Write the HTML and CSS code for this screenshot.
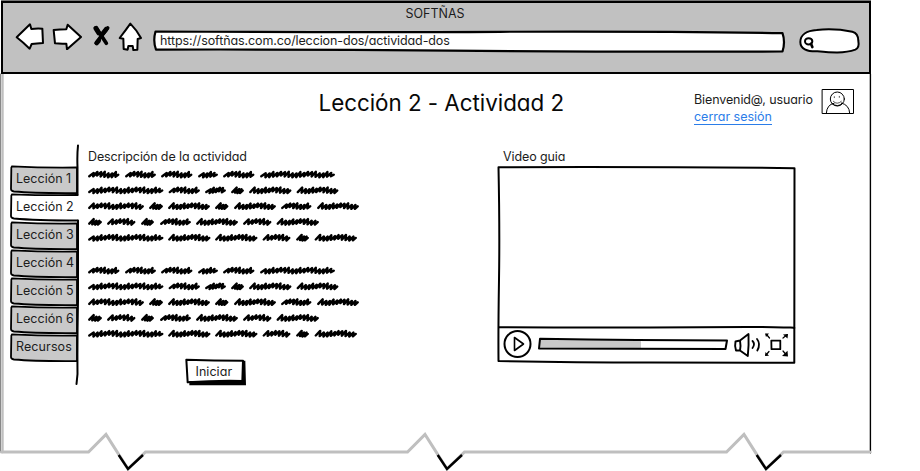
FILE: index.html
```html
<!DOCTYPE html>
<html lang="es">
<head>
<meta charset="utf-8">
<title>SOFTÑAS</title>
<link rel="stylesheet" href="styles.css">
</head>
<body>
<div class="window">
  <svg class="frame" viewBox="0 0 920 471" aria-hidden="true">
    <path d="M.5 74V452" stroke="#888" stroke-width="1"/>
    <path d="M2.5 74V452" stroke="#bfbfbf" stroke-width="2.4"/>
    <path d="M869.5 74V452" stroke="#ccc" stroke-width="1"/>
    <path d="M870.5 74V453" stroke="#000" stroke-width="1.2"/>
    <path class="edge" d="M1.5 452H88.500L106 434.500L128 469L145.500 452H407.500L425 434.500L447 469L464.500 452H726.500L744 434.500L766 469L783.500 452H870"/>
    <path class="edge tip" d="M118.700 455L128 469L143 455M437.700 455L447 469L462 455M756.700 455L766 469L781 455"/>
  </svg>

  <header class="browser">
    <div class="browser-title"><span>SOFTÑAS</span></div>
    <div class="toolbar">
      <svg class="back" viewBox="42 66 96 84"><path d="M50 112L90 73L94 87Q112 84 127 86L129 129Q110 130 95 132L89 146Q68 126 50 112Z"/></svg>
      <svg class="forward" viewBox="153 66 96 84"><path d="M161 90Q180 88 199 88L203 74L243 111L201 148L199 131Q181 132 165 130Z"/></svg>
      <svg class="stop" viewBox="276 72 60 72"><path d="M289 83Q302 104 319 130" stroke-width="11"/><path d="M323 84Q306 104 289 129" stroke-width="11"/><path d="M287 85L296 99M318 88L308 101M296 122L290 129" stroke-width="14"/></svg>
      <svg class="home" viewBox="350 62 80 96"><path d="M390 70Q376 90 358 113L369 115L370 146L382 148L384 137L397 137L399 149L411 148L412 116L422 113Q407 87 390 70Z"/></svg>
      <div class="address">
        <svg viewBox="152 28 636 28"><path d="M155.500 31.500Q350 32.500 500 31.800T782.500 33.200Q785.500 42 782.500 51.500Q600 52 450 50.600T156 49.600Q152.800 41 155.500 31.500Z"/></svg>
        <span>https://softñas.com.co/leccion-dos/actividad-dos</span>
      </div>
      <svg class="search" viewBox="534 80 192 84"><path d="M541 125C541 104 560 91 590 89C626 85 666 88 697 94Q715 98 715 122Q719 142 706 148C672 160 635 157 592 153C560 154 541 145 541 125Z"/><ellipse cx="566" cy="123" rx="11" ry="9.500"/><path d="M573 130L577 140" stroke-width="8"/></svg>
    </div>
  </header>

  <div class="masthead">
    <h1>Lección 2 - Actividad 2</h1>
    <div class="user">
      <span class="welcome">Bienvenid@, usuario</span>
      <a class="logout" href="#">cerrar sesión</a>
    </div>
    <svg class="avatar" viewBox="603 264 102 81"><path d="M607.500 268.500H700.500V340.500H607.500Z"/><path d="M619 339Q621 313 642 310M664 309Q688 315 689 339"/><circle cx="652" cy="297" r="21"/><path d="M640 304Q651 316 664 304M643 290V293M658 289V292" stroke-width="2"/><path d="M637 311Q653 324 667 310"/></svg>
  </div>

  <main class="content">
    <nav class="tabs">
      <svg class="tabs-art" viewBox="8 144 76 244" aria-hidden="true">
        <defs><path id="tab" d="M12 1.300Q11 2 11.300 5L11 24Q11 26 14 26.500Q35 28.300 77 28V2.500Q45 3 12 1.300Z"/></defs>
        <g class="tab-shapes">
          <use href="#tab" y="165"/><use href="#tab" y="221"/><use href="#tab" y="249"/><use href="#tab" y="277"/><use href="#tab" y="305"/><use href="#tab" y="333"/>
          <path class="active" d="M77.500 195Q45 195.500 12 194.300Q11 195 11.300 198L11 216Q11 218 14 218.500Q35 220.500 77.500 220.500"/>
        </g>
        <path class="spine" d="M78 145.500Q77 155 77.500 167V195M78 220.500V300Q77.200 340 77.500 374L76.500 384"/>
      </svg>
      <a href="#">Lección 1</a>
      <a href="#">Lección 2</a>
      <a href="#">Lección 3</a>
      <a href="#">Lección 4</a>
      <a href="#">Lección 5</a>
      <a href="#">Lección 6</a>
      <a class="resources" href="#">Recursos</a>
    </nav>

    <section class="activity">
      <h2>Descripción de la actividad</h2>
      <svg class="scribble" viewBox="80 166 290 80" aria-hidden="true"></svg>
      <svg class="scribble" viewBox="80 262 290 80" aria-hidden="true"></svg>
      <button class="start" type="button">
        <svg viewBox="312 322 192 90"><path d="M328 394H488L487 333H496L498 407H328Z" fill="#000" stroke="none"/><path d="M319 330Q400 333 489 333L487 394Q410 392 323 398Z"/></svg>
        <span>Iniciar</span>
      </button>
    </section>

    <section class="video">
      <h2>Video guia</h2>
      <svg class="player" viewBox="496 164 302 202" role="img" aria-label="Reproductor">
        <path class="panel" d="M498.500 167.200Q650 166.500 794.500 168.200Q794.200 270 794.300 362.700L650 362.600Q570 362.300 498.500 361Q498.200 330 499 280T498.500 167.200Z"/>
        <path d="M499 327.200Q600 327.700 700 327.200T794 328" stroke-width="2"/>
        <circle cx="517.500" cy="344" r="13"/>
        <path d="M514.500 337.500V350.500L523.500 344Z" stroke-width="1.600"/>
        <path d="M540 339L641 340V348.700L539 348.500Z" fill="#c9c9c9" stroke="none"/>
        <path d="M540 338.800Q640 340.500 727 340.500L725.500 349Q640 349 539 348.500Z" stroke-width="2"/>
        <path d="M735.500 341.500L740 340.500L748.500 334Q749 345 747.800 356L740 350.500H736Q734.500 346 735.500 341.500ZM740 340.500Q741 346 740 350.500" stroke-width="1.900"/>
        <path d="M752.500 341Q755.500 344 752.500 348M757 339Q761 344 757.300 350.500" stroke-width="1.800"/>
        <path d="M771.300 340.600H780.300V349.200H771.500Z" stroke-width="1.800"/>
        <path d="M769.500 338L766.500 334.500M783 338L787 334.700M769 351.500L766 355M783 351L786 354.500" stroke-width="1.200"/>
        <path d="M765 333.500L769 333.500L766 337ZM788 334L783 334.500L787.500 338.500ZM765 356L765.500 352L769 355.700ZM788 356.500L782 356L787.500 350.700Z" fill="#000" stroke="none"/>
      </svg>
    </section>
  </main>
</div>
<script src="scribble.js"></script>
</body>
</html>
```
FILE: styles.css
```css
* { box-sizing: border-box; }

body {
  margin: 0;
  width: 920px;
  height: 471px;
  overflow: hidden;
  background: #fff;
  color: #1c1c1c;
  font: 400 12.5px/16px Inter, "Liberation Sans", sans-serif;
  font-feature-settings: "cv11" 1;
  letter-spacing: -0.11px;
}

svg { display: block; fill: none; stroke: #000; stroke-linejoin: round; stroke-linecap: round; }
h1, h2 { margin: 0; font-weight: 400; }
a { color: inherit; text-decoration: none; }

.window { position: relative; display: flow-root; width: 872px; height: 471px; }
.frame { position: absolute; left: 0; top: 0; width: 920px; height: 471px; z-index: -1; }
.edge { stroke: #bfbfbf; stroke-width: 3; stroke-linejoin: miter; }
.edge.tip { stroke: #000; stroke-width: 2.4; stroke-linecap: butt; }

.browser {
  height: 73px;
  width: 870px;
  margin: 1px 0 0 1px;
  border: 2px solid #000;
  box-shadow: 0 -1px #777;
  background: #c1c1c1;
}
.browser-title { height: 19px; padding-top: 3px; text-align: center; }
.browser-title span { margin-right: 2px; letter-spacing: 0; }
.toolbar { display: flex; align-items: flex-start; margin-left: 11px; }
.toolbar svg { fill: #fff; stroke-width: 6; }
.back, .forward { width: 32px; height: 28px; margin-right: 5px; }
.toolbar .forward { margin-right: 9px; }
.toolbar .stop { width: 20px; height: 24px; margin: 2px 5px 0 0; fill: none; }
.home { width: 26.7px; height: 32px; margin: -1px 8.3px 0 0; }
.address { display: grid; width: 636px; height: 28px; margin-top: 6px; }
.address > * { grid-area: 1 / 1; }
.address svg { width: 636px; height: 28px; stroke-width: 2.2; }
.address span { padding: 5px 0 0 8px; z-index: 1; }
.search { width: 64px; height: 28px; margin: 5px 0 0 10px; }

.masthead { display: flex; height: 70px; }
h1 { width: 376px; margin: 14px 0 0 318.5px; color: #080808; font-size: 22.4px; line-height: 30px; letter-spacing: -0.03px; }
.user { display: flex; flex-direction: column; width: 125px; margin: 17px 0 0 -0.5px; line-height: 17px; }
.logout { align-self: flex-start; height: 17px; color: #2b7de9; border-bottom: 1px solid #2b7de9; letter-spacing: -0.02px; }
.avatar { width: 34px; height: 27px; margin: 14px 0 0 2px; stroke-width: 3; }

.content { display: flex; align-items: flex-start; }
.tabs { display: grid; grid-template-columns: 76px; grid-template-rows: 20px repeat(7, 28px); width: 76px; height: 244px; margin-left: 8px; }
.tabs-art { grid-area: 1 / 1 / 9 / 2; width: 76px; height: 244px; }
.tabs a { grid-column: 1; padding: 7px 0 0 8px; z-index: 1; white-space: nowrap; letter-spacing: 0; }
.tabs a:nth-of-type(1) { grid-row: 2; }
.tabs a:nth-of-type(2) { grid-row: 3; }
.tabs a:nth-of-type(3) { grid-row: 4; }
.tabs a:nth-of-type(4) { grid-row: 5; }
.tabs a:nth-of-type(5) { grid-row: 6; }
.tabs a:nth-of-type(6) { grid-row: 7; }
.tabs a:nth-of-type(7) { grid-row: 8; }
.tabs .resources { letter-spacing: 0.1px; }
.tab-shapes { fill: #c9c9c9; stroke-width: 1.8; }
.active { fill: #fff; }
.spine { stroke-width: 2; }

h2 { font-size: 12.5px; line-height: 16px; white-space: nowrap; }
.activity { display: flex; flex-direction: column; width: 290px; margin-left: -4px; padding-top: 5px; }
.activity h2 { padding-left: 8px; margin-bottom: 1px; }
.scribble { width: 290px; height: 80px; margin-bottom: 16px; stroke-width: 2.4; }
.start {
  display: grid;
  width: 64px;
  height: 30px;
  margin: -1px 0 0 104px;
  padding: 0;
  border: 0;
  background: none;
  font: inherit;
  color: inherit;
  font-feature-settings: inherit;
  letter-spacing: 0.05px;
  text-align: left;
}
.start > * { grid-area: 1 / 1; }
.start svg { width: 64px; height: 30px; stroke-width: 6; }
.start span { padding: 7px 0 0 11.5px; z-index: 1; }

.video { width: 302px; margin-left: 126px; padding-top: 5px; }
.video h2 { padding-left: 7px; margin-bottom: -1px; }
.player { width: 302px; height: 202px; stroke-width: 2; }
.panel { stroke-width: 2; }
```
FILE: scribble.js
```js
// Placeholder copy: every pair is the start and end of one scribbled word.
const lines = [
  [[88, 119.5], [125, 156], [161, 192.5], [198, 218], [223, 254.5], [260, 335]],
  [[88, 163.5], [168.5, 200], [205, 226], [231, 244], [249, 291.5], [296.5, 338.5]],
  [[88, 144], [149, 163], [168, 210], [215, 228.5], [234, 276], [281, 311.5], [317, 359]],
  [[88, 102], [107, 135.5], [141, 154], [160, 191], [196, 238], [243, 271.5], [276.5, 319]],
  [[88, 163.5], [168, 210.5], [215, 257.5], [262.5, 290.5], [296, 309], [314.5, 357]]
];

// Each stroke leans right: rise height, then depth of the following drop.
const strokes = [[1.4, 2], [2.4, 1.2], [2.2, 2.2], [2.6, 2.6], [1, 3], [0.9, 2.9], [2.3, 2.4]];

function word(x0, x1, y) {
  const left = x0 + 1.3;
  const right = x1 - 1.3;
  const count = Math.max(3, Math.round((right - left) / 4));
  const step = (right - left - 3) / count;
  let d = `M${left} ${y + 2}`;
  for (let i = 0; i < count; i++) {
    const x = left + i * step;
    const [high, low] = strokes[(i + count) % strokes.length];
    d += `L${(x + 4.4).toFixed(1)} ${y - high}L${(x + step + 0.2).toFixed(1)} ${y + low}`;
  }
  return d + `L${right} ${y + 0.4}`;
}

document.querySelectorAll('.scribble').forEach(svg => {
  const top = svg.viewBox.baseVal.y;
  const path = document.createElementNS('http://www.w3.org/2000/svg', 'path');
  path.setAttribute('d', lines.map((line, row) =>
    line.map(([a, b]) => word(a, b, top + 8.3 + row * 15.8)).join('')).join(''));
  svg.append(path);
});
```
